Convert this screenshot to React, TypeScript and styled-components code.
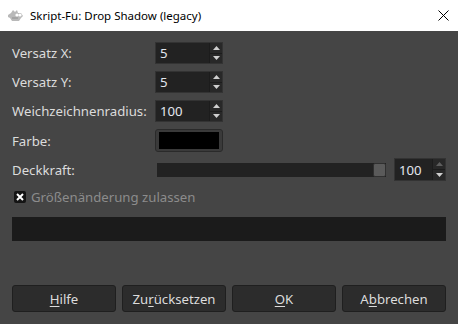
import { createGlobalStyle, styled } from 'styled-components';

const GlobalStyle = createGlobalStyle`
  html, body {
    margin: 0;
    padding: 0;
    background: #454545;
  }
  * { box-sizing: border-box; }
`;

const Window = styled.div`
  width: 458px;
  height: 324px;
  display: flex;
  flex-direction: column;
  background: #454545;
  font-family: "Noto Sans", "Open Sans", sans-serif;
  font-size: 13.2px;
  color: #dcdcdc;
  overflow: hidden;
`;

const TitleBar = styled.div`
  height: 31px;
  flex: none;
  background: #ffffff;
  display: flex;
  align-items: center;
  padding: 0 0 0 7px;
  color: #000;
  font-size: 11.5px;
`;

const TitleText = styled.span`
  margin-left: 6px;
  flex: 1;
`;

const CloseBox = styled.div`
  width: 30px;
  height: 31px;
  display: flex;
  align-items: center;
  justify-content: center;
`;

const Content = styled.div`
  flex: 1;
  display: flex;
  flex-direction: column;
  padding: 11px 12px 12px 12px;
`;

const Row = styled.div<{ $h: number; $mt?: number }>`
  display: flex;
  align-items: center;
  height: ${(p) => p.$h}px;
  margin-top: ${(p) => p.$mt ?? 0}px;
`;

const Label = styled.div`
  width: 143px;
  flex: none;
  white-space: nowrap;
`;

const Spin = styled.div<{ $w: number; $h: number }>`
  display: flex;
  width: ${(p) => p.$w}px;
  height: ${(p) => p.$h}px;
  border: 1px solid #333333;
  background: #222222;
`;

const SpinText = styled.div`
  flex: 1;
  display: flex;
  align-items: center;
  padding-left: 4px;
  color: #e2e6ee;
`;

const SpinButtons = styled.div`
  width: 13px;
  display: flex;
  flex-direction: column;
  border-left: 1px solid #1c1c1c;
`;

const SpinBtn = styled.div<{ $disabled?: boolean }>`
  flex: 1;
  display: flex;
  align-items: center;
  justify-content: center;
  background: #282828;
  color: ${(p) => (p.$disabled ? '#5e5e5e' : '#cfcfcf')};
  & + & { border-top: 1px solid #1c1c1c; }
`;

const ColorButton = styled.div`
  width: 68px;
  height: 23px;
  border: 1px solid #2a2a2a;
  border-radius: 3px;
  background: #3a3a3a;
  padding: 2px 3px;
  display: flex;
`;

const Swatch = styled.div`
  flex: 1;
  background: #000;
`;

const Trough = styled.div`
  width: 229px;
  height: 14px;
  margin-left: 2px;
  margin-right: 8px;
  background: #222222;
  display: flex;
  justify-content: flex-end;
`;

const Handle = styled.div`
  width: 13px;
  height: 14px;
  border-radius: 2px;
  background: #5a5a5a;
  border: 1px solid #303030;
`;

const CheckRow = styled.div`
  display: flex;
  align-items: center;
  height: 12px;
  margin-top: 10px;
  padding-left: 2px;
  color: #8c8c8c;
`;

const CheckBox = styled.div`
  width: 12px;
  height: 12px;
  border-radius: 2px;
  background: #141414;
  display: flex;
  align-items: center;
  justify-content: center;
  margin-right: 5px;
`;

const Progress = styled.div`
  height: 24px;
  margin-top: 14px;
  background: #1b1b1b;
`;

const Spacer = styled.div`
  flex: 1;
`;

const ButtonBar = styled.div`
  display: grid;
  grid-template-columns: repeat(4, 104px);
  column-gap: 6px;
`;

const Button = styled.div`
  height: 27px;
  border: 1px solid #1f1f1f;
  border-radius: 3px;
  background: #2c2c2c;
  display: flex;
  align-items: center;
  justify-content: center;
  color: #dcdcdc;
  u { text-underline-offset: 2px; }
`;

function Arrow({ up }: { up?: boolean }) {
  return (
    <svg width="7" height="4" viewBox="0 0 7 4">
      <path d={up ? 'M0 4 L3.5 0 L7 4 Z' : 'M0 0 L3.5 4 L7 0 Z'} fill="currentColor" />
    </svg>
  );
}

function SpinBox({ value, w, h, upDisabled }: { value: string; w: number; h: number; upDisabled?: boolean }) {
  return (
    <Spin $w={w} $h={h}>
      <SpinText>{value}</SpinText>
      <SpinButtons>
        <SpinBtn $disabled={upDisabled}><Arrow up /></SpinBtn>
        <SpinBtn><Arrow /></SpinBtn>
      </SpinButtons>
    </Spin>
  );
}

function Wilber() {
  return (
    <svg width="17" height="13" viewBox="0 0 17 13">
      <path d="M1 6 L4 4 L6 1 L8 3 L10 1 L11 4 L14 4 L16 7 L14 9 L12 12 L5 12 L3 9 L1 8 Z" fill="#b9b9b9" />
      <circle cx="10" cy="6" r="1.6" fill="#fff" />
      <circle cx="13" cy="6" r="1.6" fill="#fff" />
      <path d="M5 9 L11 9" stroke="#8f8f8f" strokeWidth="1" />
    </svg>
  );
}

export default function App() {
  return (
    <>
      <GlobalStyle />
      <Window>
        <TitleBar>
          <Wilber />
          <TitleText>Skript-Fu: Drop Shadow (legacy)</TitleText>
          <CloseBox>
            <svg width="11" height="11" viewBox="0 0 11 11">
              <path d="M0.5 0.5 L10.5 10.5 M10.5 0.5 L0.5 10.5" stroke="#000" strokeWidth="1" />
            </svg>
          </CloseBox>
        </TitleBar>
        <Content>
          <Row $h={22}>
            <Label>Versatz X:</Label>
            <SpinBox value="5" w={68} h={22} />
          </Row>
          <Row $h={22} $mt={7}>
            <Label>Versatz Y:</Label>
            <SpinBox value="5" w={68} h={22} />
          </Row>
          <Row $h={22} $mt={7}>
            <Label>Weichzeichnenradius:</Label>
            <SpinBox value="100" w={68} h={22} />
          </Row>
          <Row $h={23} $mt={7}>
            <Label>Farbe:</Label>
            <ColorButton><Swatch /></ColorButton>
          </Row>
          <Row $h={23} $mt={6}>
            <Label>Deckkraft:</Label>
            <Trough><Handle /></Trough>
            <SpinBox value="100" w={52} h={23} upDisabled />
          </Row>
          <CheckRow>
            <CheckBox>
              <svg width="8" height="8" viewBox="0 0 8 8">
                <path d="M1 1 L7 7 M7 1 L1 7" stroke="#fff" strokeWidth="2" />
              </svg>
            </CheckBox>
            Größenänderung zulassen
          </CheckRow>
          <Progress />
          <Spacer />
          <ButtonBar>
            <Button><span><u>H</u>ilfe</span></Button>
            <Button><span>Zu<u>r</u>ücksetzen</span></Button>
            <Button><span><u>O</u>K</span></Button>
            <Button><span>A<u>b</u>brechen</span></Button>
          </ButtonBar>
        </Content>
      </Window>
    </>
  );
}
